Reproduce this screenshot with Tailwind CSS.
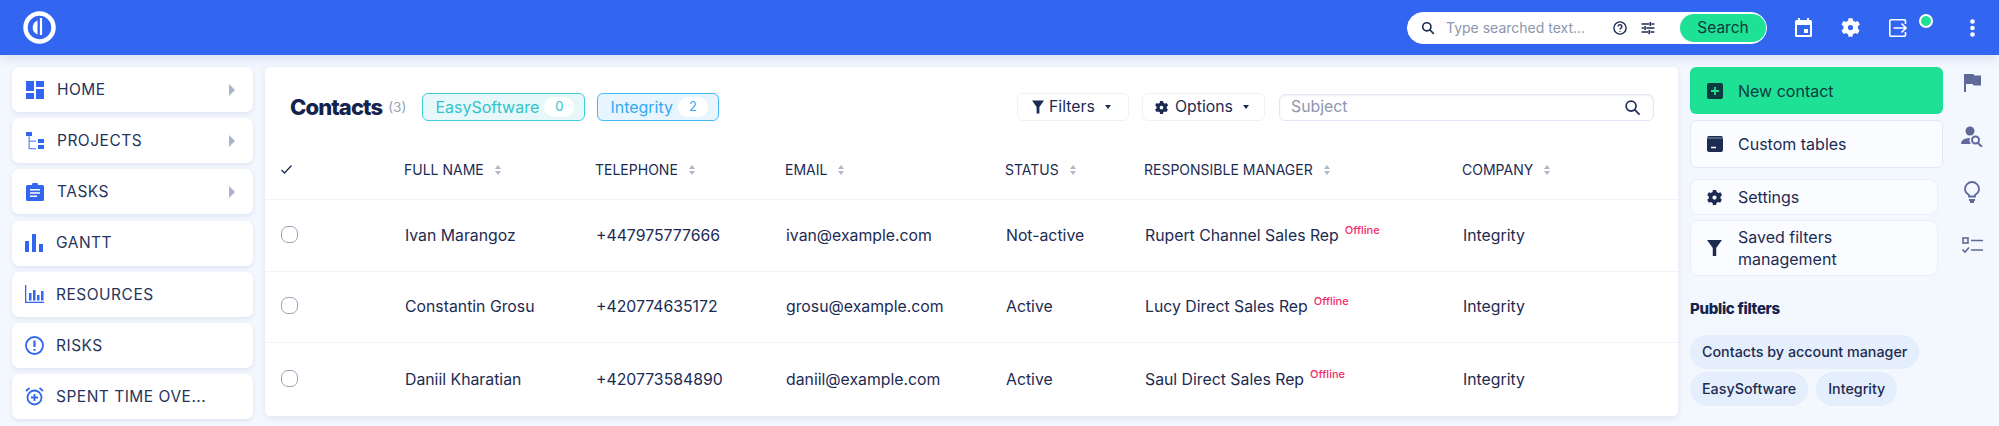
<!DOCTYPE html>
<html lang="en">
<head>
    <meta charset="UTF-8">
    <meta name="viewport" content="width=device-width, initial-scale=1.0">
    <title>Contacts</title>
    <script src="https://cdn.jsdelivr.net/npm/@tailwindcss/browser@4"></script>
</head>
<body class="bg-[#f3f7fe] font-['Inter',sans-serif] text-[#1c2b52] w-[1999px] h-[426px] overflow-hidden">
    <!-- Top bar -->
    <header class="relative h-[55px] bg-[#3366f0] flex items-center pl-[23px] pr-[24px] shadow-[0_3px_10px_rgba(40,70,140,0.14)]">
        <svg width="33" height="33" viewBox="0 0 33 33" fill="none" stroke="#fff">
            <circle cx="16.5" cy="16.5" r="14" stroke-width="4.5"/>
            <path d="M14.5 9.5a7.500 7.500 0 0 0 0 14z" fill="#fff" stroke="none"/>
            <path d="M18 7v17" stroke-width="2.2"/>
        </svg>
        <div class="ml-auto flex items-center h-[32px] w-[360px] bg-white rounded-full border border-white pl-[13px]">
            <svg width="14" height="14" viewBox="0 0 24 24" fill="none" stroke="#1c2b52" stroke-width="2.800"><circle cx="10" cy="10" r="7"/><path d="M15 15l7 7"/></svg>
            <span class="ml-[11px] text-[14px] text-[#8d96ac] w-[140px] whitespace-nowrap">Type searched text...</span>
            <svg class="ml-[27px]" width="14" height="14" viewBox="0 0 24 24" fill="none" stroke="#1c2b52" stroke-width="2.400"><circle cx="12" cy="12" r="10.500"/><path d="M8.800 9.500a3.200 3.200 0 1 1 4.800 2.800c-1 .6-1.600 1.200-1.600 2.400M12 17v1.500"/></svg>
            <svg class="ml-[14px]" width="14" height="14" viewBox="0 0 24 24" fill="none" stroke="#1c2b52" stroke-width="2.600"><path d="M1 5h13M18 5h5M1 12h4M9 12h14M1 19h11M16 19h7M16 1.500v7M7 8.500v7M14 15.500v7"/></svg>
            <span class="ml-[25px] h-[28px] w-[86px] rounded-full bg-[#1fe196] text-[#0d3a3f] text-[15.5px] flex items-center justify-center">Search</span>
        </div>
        <svg class="ml-[28px]" width="17" height="19" viewBox="0 0 17 19" fill="#fff"><path fill-rule="evenodd" d="M3 0h2v2h7V0h2v2h1.500A1.500 1.500 0 0 1 17 3.500v14a1.500 1.500 0 0 1-1.500 1.500h-14A1.500 1.500 0 0 1 0 17.500v-14A1.500 1.500 0 0 1 1.500 2H3zM2 7v10h13V7z"/><rect x="9" y="11" width="4" height="4"/></svg>
        <svg class="ml-[28px]" width="21" height="21" viewBox="0 0 24 24" fill="#fff"><path fill-rule="evenodd" d="M20.400 13.500a8.500 8.500 0 0 0 0-3l2.300-1.800-2.300-4-2.800 1.100a8.500 8.500 0 0 0-2.500-1.500L14.300 1.500H9.700L9.300 4.300a8.500 8.500 0 0 0-2.500 1.500L4 4.700l-2.300 4L4 10.500a8.500 8.500 0 0 0 0 3l-2.300 1.800 2.300 4 2.800-1.100a8.500 8.500 0 0 0 2.500 1.500l.4 2.800h4.600l.4-2.800a8.500 8.500 0 0 0 2.500-1.500l2.800 1.100 2.300-4zM12 15a3 3 0 1 1 0-6 3 3 0 0 1 0 6z"/></svg>
        <svg class="ml-[28px]" width="18" height="18" viewBox="0 0 18 18" fill="none" stroke="#fff" stroke-width="1.600"><path d="M16.500 5V2A1.200 1.200 0 0 0 15.300.8H2A1.200 1.200 0 0 0 .8 2v14A1.200 1.200 0 0 0 2 17.200h13.300a1.200 1.200 0 0 0 1.200-1.200v-3M4.500 9h12.800M12.500 4.500L17 9l-4.500 4.500"/></svg>
        <span class="ml-[12px] mb-[14px] w-[14px] h-[14px] rounded-full bg-[#1fe196] border-2 border-white"></span>
        <svg class="ml-[37px]" width="5" height="18" viewBox="0 0 5 18" fill="#fff"><circle cx="2.500" cy="2.500" r="2.300"/><circle cx="2.500" cy="9" r="2.300"/><circle cx="2.500" cy="15.500" r="2.300"/></svg>
    </header>

    <div class="flex pt-[12px]">
        <!-- Left menu -->
        <nav class="w-[241px] ml-[12px] flex flex-col gap-[6.2px] text-[15.5px] tracking-[0.5px] shrink-0 text-[#26355c]">
            <a class="h-[45px] bg-white rounded-[7px] shadow-[0_2px_4px_rgba(40,70,140,0.1)] flex items-center pl-[14px] pr-[18px]">
                <svg class="w-[18px] h-[18px] text-[#3366f0]" viewBox="0 0 18 18" fill="currentColor"><path d="M0 0h8v10H0zM10 0h8v6h-8zM0 12h8v6H0zM10 8h8v10h-8z"/></svg>
                <span class="ml-[13px]">HOME</span>
                <span class="ml-auto border-y-[6px] border-y-transparent border-l-[6px] border-l-[#a9b3c9]"></span>
            </a>
            <a class="h-[45px] bg-white rounded-[7px] shadow-[0_2px_4px_rgba(40,70,140,0.1)] flex items-center pl-[14px] pr-[18px]">
                <svg class="w-[18px] h-[18px] text-[#3366f0]" viewBox="0 0 18 18" fill="currentColor"><path d="M0 0h6v4H0zM12 7h6v4h-6zM12 13h6v4h-6z"/><path d="M2.500 4h1.300v12h6.200v1.300H2.500zM3.800 8.500H10v1.300H3.800z" opacity=".75"/></svg>
                <span class="ml-[13px]">PROJECTS</span>
                <span class="ml-auto border-y-[6px] border-y-transparent border-l-[6px] border-l-[#a9b3c9]"></span>
            </a>
            <a class="h-[45px] bg-white rounded-[7px] shadow-[0_2px_4px_rgba(40,70,140,0.1)] flex items-center pl-[14px] pr-[18px]">
                <svg class="w-[18px] h-[18px] text-[#3366f0]" viewBox="0 0 18 18" fill="currentColor"><path fill-rule="evenodd" d="M1.500 2H6a3 3 0 0 1 6 0h4.500A1.500 1.500 0 0 1 18 3.500v13a1.500 1.500 0 0 1-1.500 1.500h-15A1.500 1.500 0 0 1 0 16.500v-13A1.500 1.500 0 0 1 1.500 2zM4 6v1.500h10V6zM4 9.300v1.500h10V9.300zM4 12.600v1.500h7v-1.500z"/></svg>
                <span class="ml-[13px]">TASKS</span>
                <span class="ml-auto border-y-[6px] border-y-transparent border-l-[6px] border-l-[#a9b3c9]"></span>
            </a>
            <a class="h-[45px] bg-white rounded-[7px] shadow-[0_2px_4px_rgba(40,70,140,0.1)] flex items-center pl-[13px] pr-[18px]">
                <svg class="w-[18px] h-[18px] text-[#3366f0]" viewBox="0 0 18 18" fill="currentColor"><path d="M0 7h4v11H0zM7 0h4v18H7zM14 10h4v8h-4z"/></svg>
                <span class="ml-[13px]">GANTT</span>
            </a>
            <a class="h-[45px] bg-white rounded-[7px] shadow-[0_2px_4px_rgba(40,70,140,0.1)] flex items-center pl-[13px] pr-[18px]">
                <svg class="w-[19px] h-[18px] text-[#3366f0]" viewBox="0 0 19 18" fill="currentColor"><path d="M0 0h1.300v16.700H19V18H0zM4 8h2.500v7.500H4zM8 5h2.500v10.500H8zM12 10h2.500v5.500H12zM16 6h2.500v9.500H16z"/></svg>
                <span class="ml-[12px]">RESOURCES</span>
            </a>
            <a class="h-[45px] bg-white rounded-[7px] shadow-[0_2px_4px_rgba(40,70,140,0.1)] flex items-center pl-[13px] pr-[18px]">
                <svg class="w-[19px] h-[19px] text-[#3366f0]" viewBox="0 0 19 19" fill="none" stroke="currentColor" stroke-width="1.800"><circle cx="9.500" cy="9.500" r="8.500"/><path d="M9.500 4.500v6.500M9.500 13v1.800" stroke-width="2.200"/></svg>
                <span class="ml-[12px]">RISKS</span>
            </a>
            <a class="h-[45px] bg-white rounded-[7px] shadow-[0_2px_4px_rgba(40,70,140,0.1)] flex items-center pl-[13px] pr-[18px]">
                <svg class="w-[19px] h-[19px] text-[#3366f0]" viewBox="0 0 19 19" fill="none" stroke="currentColor" stroke-width="1.800"><circle cx="9.500" cy="10.500" r="7"/><path d="M9.500 7v7M6 10.500h7M1 4l3.500-3M18 4l-3.500-3"/></svg>
                <span class="ml-[12px] whitespace-nowrap">SPENT TIME OVE...</span>
            </a>
        </nav>

        <!-- Contacts list -->
        <main class="ml-[12px] w-[1413px] h-[349px] bg-white rounded-[5px] shadow-[0_2px_6px_rgba(40,70,140,0.1)] shrink-0 text-[15.8px]">
            <div class="h-[80px] flex items-center pl-[25px] pr-[24px]">
                <h1 class="text-[22px] font-extrabold tracking-[-0.9px] text-[#14234d]">Contacts</h1>
                <span class="ml-[6px] text-[13.5px] text-[#9aa2b5]">(3)</span>
                <span class="ml-[16px] h-[28px] w-[163px] rounded-[6px] border border-[#3fd0d8] bg-[#e8f8fa] text-[#2fc4cc] flex items-center pl-[12px] text-[16px]">EasySoftware<span class="ml-[5px] w-[30px] h-[20px] rounded-full bg-white text-[13px] flex items-center justify-center">0</span></span>
                <span class="ml-[12px] h-[28px] w-[122px] rounded-[6px] border border-[#45b8f8] bg-[#e9f5fe] text-[#35aaf2] flex items-center pl-[12px] text-[16px]">Integrity<span class="ml-[5px] w-[30px] h-[20px] rounded-full bg-white text-[13px] flex items-center justify-center">2</span></span>
                <span class="ml-auto h-[28px] w-[112px] rounded-[6px] border border-[#eef1f7] flex items-center pl-[14px] gap-[5px]"><svg width="12" height="14" viewBox="0 0 13 14" fill="#1c2b52"><path d="M0 0h13L8 7v7H5V7z"/></svg>Filters<span class="ml-[5px] border-x-[3.5px] border-x-transparent border-t-[4px] border-t-[#1c2b52]"></span></span>
                <span class="ml-[13px] h-[28px] w-[123px] rounded-[6px] border border-[#eef1f7] flex items-center pl-[11px] gap-[6px]"><svg width="15" height="15" viewBox="0 0 24 24" fill="#1c2b52"><path fill-rule="evenodd" d="M20.400 13.500a8.500 8.500 0 0 0 0-3l2.300-1.800-2.300-4-2.800 1.100a8.500 8.500 0 0 0-2.500-1.500L14.300 1.500H9.700L9.300 4.300a8.500 8.500 0 0 0-2.500 1.500L4 4.700l-2.300 4L4 10.500a8.500 8.500 0 0 0 0 3l-2.300 1.800 2.300 4 2.800-1.100a8.500 8.500 0 0 0 2.500 1.500l.4 2.800h4.600l.4-2.800a8.500 8.500 0 0 0 2.500-1.500l2.800 1.100 2.300-4zM12 15a3 3 0 1 1 0-6 3 3 0 0 1 0 6z"/></svg>Options<span class="ml-[4px] border-x-[3.5px] border-x-transparent border-t-[4px] border-t-[#1c2b52]"></span></span>
                <span class="ml-[14px] h-[27px] w-[375px] rounded-[6px] border border-[#dfe6f5] shadow-[inset_0_1px_2px_rgba(40,70,140,0.08)] flex items-center pl-[11px] pr-[12px] text-[#8d96ac]">Subject<svg class="ml-auto" width="17" height="17" viewBox="0 0 24 24" fill="none" stroke="#1c2b52" stroke-width="2.400"><circle cx="10" cy="10" r="7"/><path d="M15 15l7 7"/></svg></span>
            </div>
            <div class="grid grid-cols-[139px_191px_190px_220px_139px_318px_1fr] h-[53px] pb-[7px] items-center border-b border-[#f1f3f8] text-[14px]">
                <span class="pl-[16px]"><svg width="11" height="9" viewBox="0 0 11 9" fill="none" stroke="#1c2b52" stroke-width="1.300"><path d="M.5 5l3 3 7-7.500"/></svg></span>
                <span class="flex items-center gap-[11px]">FULL NAME<svg width="6" height="10" viewBox="0 0 6 10" fill="#aeb6c8"><path d="M3 0l3 4H0zM3 10L0 6h6z"/></svg></span>
                <span class="flex items-center gap-[11px]">TELEPHONE<svg width="6" height="10" viewBox="0 0 6 10" fill="#aeb6c8"><path d="M3 0l3 4H0zM3 10L0 6h6z"/></svg></span>
                <span class="flex items-center gap-[11px]">EMAIL<svg width="6" height="10" viewBox="0 0 6 10" fill="#aeb6c8"><path d="M3 0l3 4H0zM3 10L0 6h6z"/></svg></span>
                <span class="flex items-center gap-[11px]">STATUS<svg width="6" height="10" viewBox="0 0 6 10" fill="#aeb6c8"><path d="M3 0l3 4H0zM3 10L0 6h6z"/></svg></span>
                <span class="flex items-center gap-[11px]">RESPONSIBLE MANAGER<svg width="6" height="10" viewBox="0 0 6 10" fill="#aeb6c8"><path d="M3 0l3 4H0zM3 10L0 6h6z"/></svg></span>
                <span class="flex items-center gap-[11px]">COMPANY<svg width="6" height="10" viewBox="0 0 6 10" fill="#aeb6c8"><path d="M3 0l3 4H0zM3 10L0 6h6z"/></svg></span>
            </div>
            <div class="grid grid-cols-[139px_191px_190px_220px_139px_318px_1fr] h-[72px] items-center border-b border-[#f1f3f8]">
                <span class="pl-[16px] pb-[3px]"><span class="block w-[17px] h-[17px] rounded-[7px] border border-[#9aa3b8]"></span></span>
                <span class="pl-[1px]">Ivan Marangoz</span>
                <span class="pl-[1px]">+447975777666</span>
                <span class="pl-[1px]">ivan@example.com</span>
                <span class="pl-[1px]">Not-active</span>
                <span class="pl-[1px]">Rupert Channel Sales Rep<sup class="ml-[6px] text-[11px] font-medium text-[#f5276c] -top-[7px]">Offline</sup></span>
                <span class="pl-[1px]">Integrity</span>
            </div>
            <div class="grid grid-cols-[139px_191px_190px_220px_139px_318px_1fr] h-[71px] items-center border-b border-[#f1f3f8]">
                <span class="pl-[16px] pb-[3px]"><span class="block w-[17px] h-[17px] rounded-[7px] border border-[#9aa3b8]"></span></span>
                <span class="pl-[1px]">Constantin Grosu</span>
                <span class="pl-[1px]">+420774635172</span>
                <span class="pl-[1px]">grosu@example.com</span>
                <span class="pl-[1px]">Active</span>
                <span class="pl-[1px]">Lucy Direct Sales Rep<sup class="ml-[6px] text-[11px] font-medium text-[#f5276c] -top-[7px]">Offline</sup></span>
                <span class="pl-[1px]">Integrity</span>
            </div>
            <div class="grid grid-cols-[139px_191px_190px_220px_139px_318px_1fr] h-[73px] items-center">
                <span class="pl-[16px] pb-[3px]"><span class="block w-[17px] h-[17px] rounded-[7px] border border-[#9aa3b8]"></span></span>
                <span class="pl-[1px]">Daniil Kharatian</span>
                <span class="pl-[1px]">+420773584890</span>
                <span class="pl-[1px]">daniil@example.com</span>
                <span class="pl-[1px]">Active</span>
                <span class="pl-[1px]">Saul Direct Sales Rep<sup class="ml-[6px] text-[11px] font-medium text-[#f5276c] -top-[7px]">Offline</sup></span>
                <span class="pl-[1px]">Integrity</span>
            </div>
        </main>

        <!-- Actions -->
        <aside class="ml-[12px] w-[253px] shrink-0 text-[16px]">
            <a class="h-[47px] rounded-[6px] bg-[#1fe196] text-[#0d3a3f] flex items-center pl-[17px] gap-[15px]">
                <svg width="16" height="16" viewBox="0 0 16 16"><rect width="16" height="16" rx="2" fill="#0d3a3f"/><path d="M8 4v8M4 8h8" stroke="#1fe196" stroke-width="1.800"/></svg>New contact
            </a>
            <a class="mt-[6px] h-[48px] rounded-[6px] bg-[#fbfcff] border border-[#e3e9f6] flex items-center pl-[16px] gap-[15px]">
                <svg width="16" height="16" viewBox="0 0 16 16"><rect width="16" height="16" rx="2" fill="#1c2b52"/><path d="M4 11.500h5" stroke="#fff" stroke-width="1.500"/><path d="M0 2h16" stroke="#8d96ac" stroke-width="1"/></svg>Custom tables
            </a>
            <a class="mt-[11px] w-[248px] h-[36px] rounded-[8px] bg-[#fbfcff] border border-[#e9eef8] flex items-center pl-[15px] gap-[15px]">
                <svg width="17" height="17" viewBox="0 0 24 24" fill="#1c2b52"><path fill-rule="evenodd" d="M20.400 13.500a8.500 8.500 0 0 0 0-3l2.300-1.800-2.300-4-2.800 1.100a8.500 8.500 0 0 0-2.500-1.500L14.300 1.500H9.700L9.300 4.300a8.500 8.500 0 0 0-2.500 1.500L4 4.700l-2.300 4L4 10.500a8.500 8.500 0 0 0 0 3l-2.300 1.800 2.300 4 2.800-1.100a8.500 8.500 0 0 0 2.500 1.500l.4 2.800h4.600l.4-2.800a8.500 8.500 0 0 0 2.500-1.500l2.800 1.100 2.300-4zM12 15a3 3 0 1 1 0-6 3 3 0 0 1 0 6z"/></svg>Settings
            </a>
            <a class="mt-[5px] w-[248px] h-[56px] rounded-[8px] bg-[#fbfcff] border border-[#e9eef8] flex items-center pl-[16px] gap-[16px] leading-[22px]">
                <svg class="shrink-0" width="15" height="16" viewBox="0 0 13 14" fill="#1c2b52"><path d="M0 0h13L8 7v7H5V7z"/></svg><span>Saved filters<br>management</span>
            </a>
            <h2 class="mt-[22px] text-[15px] font-extrabold tracking-[-0.3px] text-[#14234d]">Public filters</h2>
            <div class="mt-[14px] flex flex-wrap gap-x-[8px] gap-y-[3px] text-[14.3px] font-medium">
                <span class="h-[34px] px-[12px] rounded-full bg-[#e5eefc] flex items-center">Contacts by account manager</span>
                <span class="h-[34px] px-[12px] rounded-full bg-[#e5eefc] flex items-center">EasySoftware</span>
                <span class="h-[34px] px-[12px] rounded-full bg-[#e5eefc] flex items-center">Integrity</span>
            </div>
        </aside>

        <!-- Side icons -->
        <div class="ml-[18px] w-[22px] flex flex-col items-center gap-[34px] pt-[7px] text-[#5f6a99]">
            <svg width="17" height="18" viewBox="0 0 17 18" fill="currentColor"><path d="M0 0h9.500l.8 1.500H17v10H9.500l-.8-1.500H2v8H0z"/></svg>
            <svg width="22" height="21" viewBox="0 0 22 21" fill="currentColor"><circle cx="9" cy="5" r="4.500"/><path d="M0 18c0-4 4-6 9-6-1 2-.5 4.500 1 6z"/><circle cx="14.500" cy="14" r="3.500" fill="none" stroke="currentColor" stroke-width="2"/><path d="M17 17l4 4" stroke="currentColor" stroke-width="2"/></svg>
            <svg width="16" height="22" viewBox="0 0 16 22" fill="none" stroke="currentColor" stroke-width="1.800"><path d="M5 15.500v-1.500C3 12.800 1 10.800 1 8a7 7 0 0 1 14 0c0 2.800-2 4.800-4 6v1.500zM5 19h6M6 21h4"/></svg>
            <svg width="21" height="17" viewBox="0 0 21 17" fill="none" stroke="currentColor" stroke-width="1.600"><rect x="1" y="1" width="5" height="5"/><path d="M9 3.500h12M9 13h12M.5 12.500l2.500 2.500 4-4.500"/></svg>
        </div>
    </div>
</body>
</html>
